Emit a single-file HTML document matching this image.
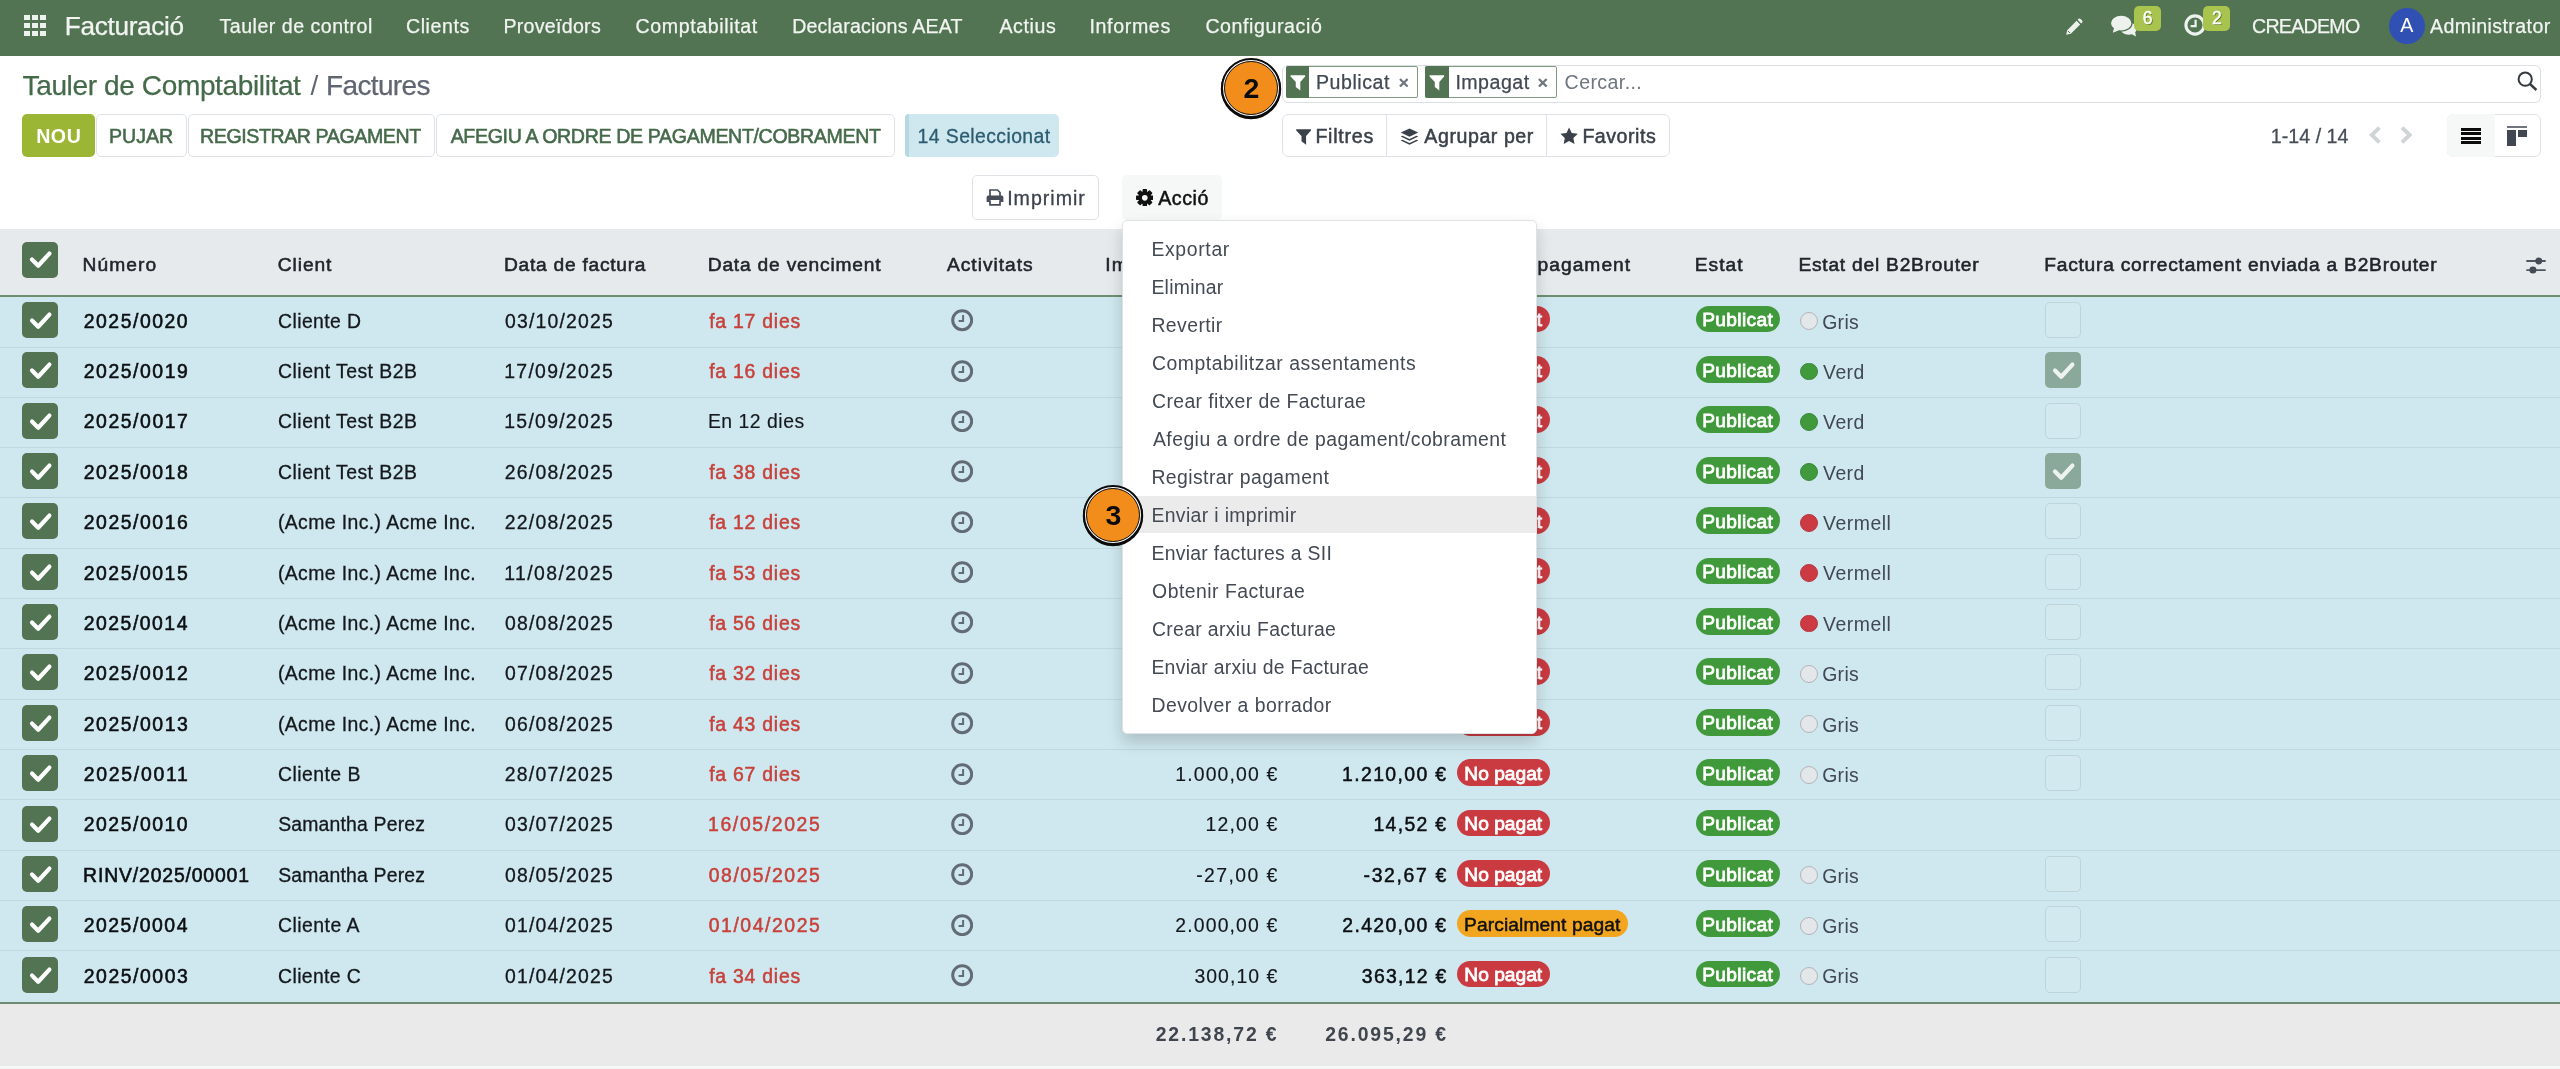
<!DOCTYPE html>
<html lang="ca"><head><meta charset="utf-8"><title>Factures - Odoo</title>
<style>html,body{margin:0;padding:0;}
body{width:2560px;height:1069px;overflow:hidden;background:#fff;position:relative;font-family:"Liberation Sans", sans-serif;}
div,svg,span{position:absolute;}
span{white-space:pre;line-height:40px;}
#L0,#L1{left:0;top:0;width:2560px;height:1069px;overflow:hidden;will-change:transform;}</style></head>
<body>
<div id="L0"><div style="left:0px;top:0px;width:2560px;height:55.5px;background:#527453;"></div>
<div style="left:23.8px;top:15.2px;width:6.1px;height:4.9px;background:#eef2ee;"></div>
<div style="left:31.700000000000003px;top:15.2px;width:6.1px;height:4.9px;background:#eef2ee;"></div>
<div style="left:39.6px;top:15.2px;width:6.1px;height:4.9px;background:#eef2ee;"></div>
<div style="left:23.8px;top:23.2px;width:6.1px;height:4.9px;background:#eef2ee;"></div>
<div style="left:31.700000000000003px;top:23.2px;width:6.1px;height:4.9px;background:#eef2ee;"></div>
<div style="left:39.6px;top:23.2px;width:6.1px;height:4.9px;background:#eef2ee;"></div>
<div style="left:23.8px;top:31.2px;width:6.1px;height:4.9px;background:#eef2ee;"></div>
<div style="left:31.700000000000003px;top:31.2px;width:6.1px;height:4.9px;background:#eef2ee;"></div>
<div style="left:39.6px;top:31.2px;width:6.1px;height:4.9px;background:#eef2ee;"></div>
<div style="left:2389px;top:8px;width:35.5px;height:35.5px;background:#3150b4;border-radius:18px;"></div>
<svg style="left:2065px;top:17.5px;" width="18" height="18" viewBox="0 0 18 18"><path d="M1.2 16.8 L2.2 12.2 L11.6 2.8 L15.2 6.4 L5.8 15.8 Z M12.6 1.8 L13.6 0.8 Q14.6 0 15.6 0.9 L17.1 2.4 Q18 3.4 17.2 4.4 L16.2 5.4 Z" fill="#eef2ee"/><path d="M3 13 L5 15" stroke="#527453" stroke-width="1"/></svg>
<svg style="left:2110px;top:15px;" width="27" height="23" viewBox="0 0 27 23"><g fill="#eef2ee"><ellipse cx="18.6" cy="13.6" rx="8.2" ry="6.1"/><path d="M20.5 18.6 L26 21.6 L24.8 15.6 Z"/></g><g fill="#eef2ee" stroke="#527453" stroke-width="2.6" paint-order="stroke"><ellipse cx="11.2" cy="8.1" rx="10.2" ry="7.3"/></g><path d="M4.2 12.6 L2.8 17.8 L9.6 14.9 Z" fill="#eef2ee"/></svg>
<div style="left:2134.2px;top:6.4px;width:26.8px;height:24.2px;background:#a8c44f;border-radius:5px;"></div>
<svg style="left:2183.5px;top:14.4px;" width="22" height="22" viewBox="0 0 22 22"><circle cx="11" cy="11" r="9.1" fill="none" stroke="#eef2ee" stroke-width="3.1"/><path d="M11.6 5.8 V12.2 H6.6" fill="none" stroke="#eef2ee" stroke-width="2.2"/></svg>
<div style="left:2203.2px;top:6.4px;width:26.6px;height:24.2px;background:#a8c44f;border-radius:5px;"></div>
<div style="left:22px;top:113.9px;width:73px;height:43.4px;background:#9bb634;border-radius:5px;"></div>
<div style="left:95.5px;top:113.9px;width:91px;height:43.4px;background:#fff;border-radius:5px;border:1.5px solid #dee2e6;box-sizing:border-box;"></div>
<div style="left:187.5px;top:113.9px;width:247.8px;height:43.4px;background:#fff;border-radius:5px;border:1.5px solid #dee2e6;box-sizing:border-box;"></div>
<div style="left:436px;top:113.9px;width:459.3px;height:43.4px;background:#fff;border-radius:5px;border:1.5px solid #dee2e6;box-sizing:border-box;"></div>
<div style="left:904.5px;top:113.9px;width:154.8px;height:43.4px;background:#cfe7ef;border-radius:5px;"></div>
<div style="left:904.5px;top:113.9px;width:4px;height:43.4px;background:#b6d8e2;border-radius:5px 0 0 5px;"></div>
<div style="left:972px;top:175.4px;width:126.8px;height:44.2px;background:#fff;border-radius:5px;border:1.5px solid #dee2e6;box-sizing:border-box;"></div>
<svg style="left:985.5px;top:188.6px;" width="18" height="17" viewBox="0 0 18 17"><path d="M4 7 V1 H11.5 L14 3.5 V7" fill="none" stroke="#464d57" stroke-width="1.7"/><path d="M0.6 8.4 Q0.6 6.6 2.4 6.6 H15.6 Q17.4 6.6 17.4 8.4 V13 H14.2 V11 H3.8 V13 H0.6 Z" fill="#464d57"/><path d="M4 11.2 V15.8 H14 V11.2" fill="none" stroke="#464d57" stroke-width="1.7"/></svg>
<div style="left:1121.8px;top:175.4px;width:100px;height:44.4px;background:#f6f8f8;border-radius:5px;"></div>
<svg style="left:1135.5px;top:188.6px;" width="17.6" height="17.6" viewBox="-9 -9 18 18"><rect x="-2.3" y="-9" width="4.6" height="18" rx="0.8" transform="rotate(0)" fill="#111"/><rect x="-2.3" y="-9" width="4.6" height="18" rx="0.8" transform="rotate(45)" fill="#111"/><rect x="-2.3" y="-9" width="4.6" height="18" rx="0.8" transform="rotate(90)" fill="#111"/><rect x="-2.3" y="-9" width="4.6" height="18" rx="0.8" transform="rotate(135)" fill="#111"/><circle r="6.6" fill="#111"/><circle r="2.9" fill="#f6f8f8"/></svg>
<div style="left:1282.3px;top:64.8px;width:1258.6px;height:37.8px;background:#fff;border-radius:6px;border:1.6px solid #dcdfe3;box-sizing:border-box;"></div>
<div style="left:1285.8px;top:66.4px;width:131.8px;height:31.2px;background:#fff;border-radius:2px;border:1.3px solid #7f9c80;box-sizing:border-box;"></div>
<div style="left:1285.8px;top:66.4px;width:23.5px;height:31.2px;background:#527453;border-radius:2px 0 0 2px;"></div>
<svg style="left:1290.0px;top:75.2px;" width="15.7" height="15.5" viewBox="0 0 15.2 15.8"><path d="M0.2 0.3 H15 V1.5 L10.1 7.1 V15.8 L5.5 12.2 V7.1 L0.2 1.5 Z" fill="#fff"/></svg>
<svg style="left:1398.8px;top:77.6px;" width="9.6" height="9.6" viewBox="0 0 10 10"><path d="M1 1 L9 9 M9 1 L1 9" stroke="#6f7680" stroke-width="2.3"/></svg>
<div style="left:1425px;top:66.4px;width:132px;height:31.2px;background:#fff;border-radius:2px;border:1.3px solid #7f9c80;box-sizing:border-box;"></div>
<div style="left:1425px;top:66.4px;width:23.5px;height:31.2px;background:#527453;border-radius:2px 0 0 2px;"></div>
<svg style="left:1429.2px;top:75.2px;" width="15.7" height="15.5" viewBox="0 0 15.2 15.8"><path d="M0.2 0.3 H15 V1.5 L10.1 7.1 V15.8 L5.5 12.2 V7.1 L0.2 1.5 Z" fill="#fff"/></svg>
<svg style="left:1538.2px;top:77.6px;" width="9.6" height="9.6" viewBox="0 0 10 10"><path d="M1 1 L9 9 M9 1 L1 9" stroke="#6f7680" stroke-width="2.3"/></svg>
<svg style="left:2517.4px;top:71.2px;" width="20.5" height="20" viewBox="0 0 20.5 20"><circle cx="8.2" cy="8.2" r="6.6" fill="none" stroke="#343a40" stroke-width="2"/><path d="M13 13 L19.4 19" stroke="#343a40" stroke-width="2.4"/></svg>
<div style="left:1282px;top:113.9px;width:388px;height:43.4px;background:#fff;border-radius:6px;border:1.5px solid #dee2e6;box-sizing:border-box;"></div>
<div style="left:1386px;top:113.9px;width:1px;height:43.4px;background:#dfe3e7;"></div>
<div style="left:1546px;top:113.9px;width:1px;height:43.4px;background:#dfe3e7;"></div>
<svg style="left:1295.9px;top:129.2px;" width="15.2" height="15.8" viewBox="0 0 15.2 15.8"><path d="M0.2 0.3 H15 V1.5 L10.1 7.1 V15.8 L5.5 12.2 V7.1 L0.2 1.5 Z" fill="#3a414a"/></svg>
<svg style="left:1399.7px;top:126.8px;" width="19" height="19.8" viewBox="0 0 20 19"><path d="M10 0.6 L19.2 5 L10 9.4 L0.8 5 Z" fill="#3a414a"/><path d="M2.6 8.2 L0.8 9.2 L10 13.6 L19.2 9.2 L17.4 8.2 L10 11.6 Z" fill="#3a414a"/><path d="M2.6 12.4 L0.8 13.4 L10 17.8 L19.2 13.4 L17.4 12.4 L10 15.8 Z" fill="#3a414a"/></svg>
<svg style="left:1560.3px;top:127.3px;" width="18.2" height="17.4" viewBox="0 0 20 19"><path d="M10 0.4 L12.9 6.6 L19.6 7.4 L14.7 12 L16 18.6 L10 15.4 L4 18.6 L5.3 12 L0.4 7.4 L7.1 6.6 Z" fill="#3a414a"/></svg>
<svg style="left:2369px;top:126.2px;" width="12.4" height="18" viewBox="0 0 12 18"><path d="M10.2 1.6 L2.6 9 L10.2 16.4" fill="none" stroke="#cfd5d6" stroke-width="3.9"/></svg>
<svg style="left:2399.6px;top:126.2px;" width="12.4" height="18" viewBox="0 0 12 18"><path d="M1.8 1.6 L9.4 9 L1.8 16.4" fill="none" stroke="#cfd5d6" stroke-width="3.9"/></svg>
<div style="left:2447.2px;top:113.9px;width:94px;height:43.4px;background:#fff;border-radius:6px;border:1.5px solid #dee2e6;box-sizing:border-box;"></div>
<div style="left:2447.2px;top:113.9px;width:47.6px;height:43.4px;background:#f6f8f8;border-radius:6px 0 0 6px;"></div>
<div style="left:2461px;top:127.8px;width:19.6px;height:3.0px;background:#0b0b0b;"></div>
<div style="left:2461px;top:132.3px;width:19.6px;height:3.0px;background:#0b0b0b;"></div>
<div style="left:2461px;top:136.8px;width:19.6px;height:3.0px;background:#0b0b0b;"></div>
<div style="left:2461px;top:141.3px;width:19.6px;height:3.0px;background:#0b0b0b;"></div>
<div style="left:2507.3px;top:126.2px;width:19.9px;height:1.5px;background:#6f757d;"></div>
<div style="left:2507.3px;top:129.7px;width:8.8px;height:16px;background:#424852;"></div>
<div style="left:2518.4px;top:129.7px;width:8.8px;height:7px;background:#424852;"></div>
<div style="left:0px;top:228.6px;width:2560px;height:66.6px;background:#e6eaed;"></div>
<div style="left:0px;top:295px;width:2560px;height:2px;background:#6d8f70;"></div>
<div style="left:22px;top:241.8px;width:36.2px;height:36.2px;background:#527453;border-radius:5px;"></div>
<svg style="left:29.4px;top:249.4px;" width="23.4" height="21.4" viewBox="0 0 23.4 21.4"><path d="M3 10.6 L9.2 16.8 L20.4 4.6" fill="none" stroke="#fff" stroke-width="4.2" stroke-linecap="round" stroke-linejoin="round"/></svg>
<svg style="left:2524.6px;top:257px;" width="21" height="17.4" viewBox="0 0 21 17.4"><path d="M1.3 4 H20.7 M1.3 13.1 H20.7" stroke="#50565f" stroke-width="1.8"/><circle cx="13.8" cy="4" r="3.5" fill="#454b54"/><circle cx="7.9" cy="13.1" r="3.5" fill="#454b54"/></svg>
<div style="left:0px;top:297px;width:2560px;height:705.6px;background:#cfe7ee;"></div>
<div style="left:22px;top:302px;width:36.2px;height:36px;background:#527453;border-radius:5px;"></div>
<svg style="left:29.4px;top:309.6px;" width="23.4" height="21.4" viewBox="0 0 23.4 21.4"><path d="M3 10.6 L9.2 16.8 L20.4 4.6" fill="none" stroke="#fff" stroke-width="4.2" stroke-linecap="round" stroke-linejoin="round"/></svg>
<svg style="left:950.8px;top:309.2px;" width="22.4" height="22.4" viewBox="0 0 22.4 22.4"><circle cx="11.2" cy="11.2" r="9.5" fill="none" stroke="#636b74" stroke-width="3"/><path d="M12.1 6 V12 H7.6" fill="none" stroke="#636b74" stroke-width="2"/></svg>
<div style="left:1457.1px;top:305.70000000000005px;width:92.6px;height:26.8px;background:#c93a41;border-radius:13.4px;"></div>
<div style="left:1695.8px;top:305.70000000000005px;width:84.4px;height:26.8px;background:#40993b;border-radius:13.4px;"></div>
<div style="left:1799.9px;top:312.3px;width:17.7px;height:17.8px;background:#e4e7ea;border-radius:9px;border:1.5px solid #b3b4b8;box-sizing:border-box;"></div>
<div style="left:2045px;top:302px;width:36px;height:36px;background:#d3e9f0;border-radius:5px;border:1.3px solid #bfd3da;box-sizing:border-box;"></div>
<div style="left:0px;top:347px;width:2560px;height:1px;background:#bfd8df;"></div>
<div style="left:22px;top:352px;width:36.2px;height:36px;background:#527453;border-radius:5px;"></div>
<svg style="left:29.4px;top:359.6px;" width="23.4" height="21.4" viewBox="0 0 23.4 21.4"><path d="M3 10.6 L9.2 16.8 L20.4 4.6" fill="none" stroke="#fff" stroke-width="4.2" stroke-linecap="round" stroke-linejoin="round"/></svg>
<svg style="left:950.8px;top:359.58px;" width="22.4" height="22.4" viewBox="0 0 22.4 22.4"><circle cx="11.2" cy="11.2" r="9.5" fill="none" stroke="#636b74" stroke-width="3"/><path d="M12.1 6 V12 H7.6" fill="none" stroke="#636b74" stroke-width="2"/></svg>
<div style="left:1457.1px;top:356.08000000000004px;width:92.6px;height:26.8px;background:#c93a41;border-radius:13.4px;"></div>
<div style="left:1695.8px;top:356.08000000000004px;width:84.4px;height:26.8px;background:#40993b;border-radius:13.4px;"></div>
<div style="left:1799.9px;top:362.68px;width:17.7px;height:17.8px;background:#40993b;border-radius:9px;border:1.2px solid #39893a;box-sizing:border-box;"></div>
<div style="left:2045px;top:352px;width:36px;height:36px;background:#8aa99b;border-radius:5px;"></div>
<svg style="left:2052.4px;top:359.6px;" width="23.4" height="21.4" viewBox="0 0 23.4 21.4"><path d="M3 10.6 L9.2 16.8 L20.4 4.6" fill="none" stroke="#eef3f1" stroke-width="4.2" stroke-linecap="round" stroke-linejoin="round"/></svg>
<div style="left:0px;top:397px;width:2560px;height:1px;background:#bfd8df;"></div>
<div style="left:22px;top:403px;width:36.2px;height:36px;background:#527453;border-radius:5px;"></div>
<svg style="left:29.4px;top:410.6px;" width="23.4" height="21.4" viewBox="0 0 23.4 21.4"><path d="M3 10.6 L9.2 16.8 L20.4 4.6" fill="none" stroke="#fff" stroke-width="4.2" stroke-linecap="round" stroke-linejoin="round"/></svg>
<svg style="left:950.8px;top:409.96px;" width="22.4" height="22.4" viewBox="0 0 22.4 22.4"><circle cx="11.2" cy="11.2" r="9.5" fill="none" stroke="#636b74" stroke-width="3"/><path d="M12.1 6 V12 H7.6" fill="none" stroke="#636b74" stroke-width="2"/></svg>
<div style="left:1457.1px;top:406.46000000000004px;width:92.6px;height:26.8px;background:#c93a41;border-radius:13.4px;"></div>
<div style="left:1695.8px;top:406.46000000000004px;width:84.4px;height:26.8px;background:#40993b;border-radius:13.4px;"></div>
<div style="left:1799.9px;top:413.06px;width:17.7px;height:17.8px;background:#40993b;border-radius:9px;border:1.2px solid #39893a;box-sizing:border-box;"></div>
<div style="left:2045px;top:403px;width:36px;height:36px;background:#d3e9f0;border-radius:5px;border:1.3px solid #bfd3da;box-sizing:border-box;"></div>
<div style="left:0px;top:447px;width:2560px;height:1px;background:#bfd8df;"></div>
<div style="left:22px;top:453px;width:36.2px;height:36px;background:#527453;border-radius:5px;"></div>
<svg style="left:29.4px;top:460.6px;" width="23.4" height="21.4" viewBox="0 0 23.4 21.4"><path d="M3 10.6 L9.2 16.8 L20.4 4.6" fill="none" stroke="#fff" stroke-width="4.2" stroke-linecap="round" stroke-linejoin="round"/></svg>
<svg style="left:950.8px;top:460.34px;" width="22.4" height="22.4" viewBox="0 0 22.4 22.4"><circle cx="11.2" cy="11.2" r="9.5" fill="none" stroke="#636b74" stroke-width="3"/><path d="M12.1 6 V12 H7.6" fill="none" stroke="#636b74" stroke-width="2"/></svg>
<div style="left:1457.1px;top:456.84000000000003px;width:92.6px;height:26.8px;background:#c93a41;border-radius:13.4px;"></div>
<div style="left:1695.8px;top:456.84000000000003px;width:84.4px;height:26.8px;background:#40993b;border-radius:13.4px;"></div>
<div style="left:1799.9px;top:463.44000000000005px;width:17.7px;height:17.8px;background:#40993b;border-radius:9px;border:1.2px solid #39893a;box-sizing:border-box;"></div>
<div style="left:2045px;top:453px;width:36px;height:36px;background:#8aa99b;border-radius:5px;"></div>
<svg style="left:2052.4px;top:460.6px;" width="23.4" height="21.4" viewBox="0 0 23.4 21.4"><path d="M3 10.6 L9.2 16.8 L20.4 4.6" fill="none" stroke="#eef3f1" stroke-width="4.2" stroke-linecap="round" stroke-linejoin="round"/></svg>
<div style="left:0px;top:497px;width:2560px;height:1px;background:#bfd8df;"></div>
<div style="left:22px;top:503px;width:36.2px;height:36px;background:#527453;border-radius:5px;"></div>
<svg style="left:29.4px;top:510.6px;" width="23.4" height="21.4" viewBox="0 0 23.4 21.4"><path d="M3 10.6 L9.2 16.8 L20.4 4.6" fill="none" stroke="#fff" stroke-width="4.2" stroke-linecap="round" stroke-linejoin="round"/></svg>
<svg style="left:950.8px;top:510.71999999999997px;" width="22.4" height="22.4" viewBox="0 0 22.4 22.4"><circle cx="11.2" cy="11.2" r="9.5" fill="none" stroke="#636b74" stroke-width="3"/><path d="M12.1 6 V12 H7.6" fill="none" stroke="#636b74" stroke-width="2"/></svg>
<div style="left:1457.1px;top:507.22px;width:92.6px;height:26.8px;background:#c93a41;border-radius:13.4px;"></div>
<div style="left:1695.8px;top:507.22px;width:84.4px;height:26.8px;background:#40993b;border-radius:13.4px;"></div>
<div style="left:1799.9px;top:513.82px;width:17.7px;height:17.8px;background:#cc3b43;border-radius:9px;border:1.2px solid #b8343c;box-sizing:border-box;"></div>
<div style="left:2045px;top:503px;width:36px;height:36px;background:#d3e9f0;border-radius:5px;border:1.3px solid #bfd3da;box-sizing:border-box;"></div>
<div style="left:0px;top:548px;width:2560px;height:1px;background:#bfd8df;"></div>
<div style="left:22px;top:554px;width:36.2px;height:36px;background:#527453;border-radius:5px;"></div>
<svg style="left:29.4px;top:561.6px;" width="23.4" height="21.4" viewBox="0 0 23.4 21.4"><path d="M3 10.6 L9.2 16.8 L20.4 4.6" fill="none" stroke="#fff" stroke-width="4.2" stroke-linecap="round" stroke-linejoin="round"/></svg>
<svg style="left:950.8px;top:561.0999999999999px;" width="22.4" height="22.4" viewBox="0 0 22.4 22.4"><circle cx="11.2" cy="11.2" r="9.5" fill="none" stroke="#636b74" stroke-width="3"/><path d="M12.1 6 V12 H7.6" fill="none" stroke="#636b74" stroke-width="2"/></svg>
<div style="left:1457.1px;top:557.6px;width:92.6px;height:26.8px;background:#c93a41;border-radius:13.4px;"></div>
<div style="left:1695.8px;top:557.6px;width:84.4px;height:26.8px;background:#40993b;border-radius:13.4px;"></div>
<div style="left:1799.9px;top:564.2px;width:17.7px;height:17.8px;background:#cc3b43;border-radius:9px;border:1.2px solid #b8343c;box-sizing:border-box;"></div>
<div style="left:2045px;top:554px;width:36px;height:36px;background:#d3e9f0;border-radius:5px;border:1.3px solid #bfd3da;box-sizing:border-box;"></div>
<div style="left:0px;top:598px;width:2560px;height:1px;background:#bfd8df;"></div>
<div style="left:22px;top:604px;width:36.2px;height:36px;background:#527453;border-radius:5px;"></div>
<svg style="left:29.4px;top:611.6px;" width="23.4" height="21.4" viewBox="0 0 23.4 21.4"><path d="M3 10.6 L9.2 16.8 L20.4 4.6" fill="none" stroke="#fff" stroke-width="4.2" stroke-linecap="round" stroke-linejoin="round"/></svg>
<svg style="left:950.8px;top:611.48px;" width="22.4" height="22.4" viewBox="0 0 22.4 22.4"><circle cx="11.2" cy="11.2" r="9.5" fill="none" stroke="#636b74" stroke-width="3"/><path d="M12.1 6 V12 H7.6" fill="none" stroke="#636b74" stroke-width="2"/></svg>
<div style="left:1457.1px;top:607.9800000000001px;width:92.6px;height:26.8px;background:#c93a41;border-radius:13.4px;"></div>
<div style="left:1695.8px;top:607.9800000000001px;width:84.4px;height:26.8px;background:#40993b;border-radius:13.4px;"></div>
<div style="left:1799.9px;top:614.58px;width:17.7px;height:17.8px;background:#cc3b43;border-radius:9px;border:1.2px solid #b8343c;box-sizing:border-box;"></div>
<div style="left:2045px;top:604px;width:36px;height:36px;background:#d3e9f0;border-radius:5px;border:1.3px solid #bfd3da;box-sizing:border-box;"></div>
<div style="left:0px;top:648px;width:2560px;height:1px;background:#bfd8df;"></div>
<div style="left:22px;top:654px;width:36.2px;height:36px;background:#527453;border-radius:5px;"></div>
<svg style="left:29.4px;top:661.6px;" width="23.4" height="21.4" viewBox="0 0 23.4 21.4"><path d="M3 10.6 L9.2 16.8 L20.4 4.6" fill="none" stroke="#fff" stroke-width="4.2" stroke-linecap="round" stroke-linejoin="round"/></svg>
<svg style="left:950.8px;top:661.8599999999999px;" width="22.4" height="22.4" viewBox="0 0 22.4 22.4"><circle cx="11.2" cy="11.2" r="9.5" fill="none" stroke="#636b74" stroke-width="3"/><path d="M12.1 6 V12 H7.6" fill="none" stroke="#636b74" stroke-width="2"/></svg>
<div style="left:1457.1px;top:658.36px;width:92.6px;height:26.8px;background:#c93a41;border-radius:13.4px;"></div>
<div style="left:1695.8px;top:658.36px;width:84.4px;height:26.8px;background:#40993b;border-radius:13.4px;"></div>
<div style="left:1799.9px;top:664.96px;width:17.7px;height:17.8px;background:#e4e7ea;border-radius:9px;border:1.5px solid #b3b4b8;box-sizing:border-box;"></div>
<div style="left:2045px;top:654px;width:36px;height:36px;background:#d3e9f0;border-radius:5px;border:1.3px solid #bfd3da;box-sizing:border-box;"></div>
<div style="left:0px;top:699px;width:2560px;height:1px;background:#bfd8df;"></div>
<div style="left:22px;top:705px;width:36.2px;height:36px;background:#527453;border-radius:5px;"></div>
<svg style="left:29.4px;top:712.6px;" width="23.4" height="21.4" viewBox="0 0 23.4 21.4"><path d="M3 10.6 L9.2 16.8 L20.4 4.6" fill="none" stroke="#fff" stroke-width="4.2" stroke-linecap="round" stroke-linejoin="round"/></svg>
<svg style="left:950.8px;top:712.24px;" width="22.4" height="22.4" viewBox="0 0 22.4 22.4"><circle cx="11.2" cy="11.2" r="9.5" fill="none" stroke="#636b74" stroke-width="3"/><path d="M12.1 6 V12 H7.6" fill="none" stroke="#636b74" stroke-width="2"/></svg>
<div style="left:1457.1px;top:708.7400000000001px;width:92.6px;height:26.8px;background:#c93a41;border-radius:13.4px;"></div>
<div style="left:1695.8px;top:708.7400000000001px;width:84.4px;height:26.8px;background:#40993b;border-radius:13.4px;"></div>
<div style="left:1799.9px;top:715.34px;width:17.7px;height:17.8px;background:#e4e7ea;border-radius:9px;border:1.5px solid #b3b4b8;box-sizing:border-box;"></div>
<div style="left:2045px;top:705px;width:36px;height:36px;background:#d3e9f0;border-radius:5px;border:1.3px solid #bfd3da;box-sizing:border-box;"></div>
<div style="left:0px;top:749px;width:2560px;height:1px;background:#bfd8df;"></div>
<div style="left:22px;top:755px;width:36.2px;height:36px;background:#527453;border-radius:5px;"></div>
<svg style="left:29.4px;top:762.6px;" width="23.4" height="21.4" viewBox="0 0 23.4 21.4"><path d="M3 10.6 L9.2 16.8 L20.4 4.6" fill="none" stroke="#fff" stroke-width="4.2" stroke-linecap="round" stroke-linejoin="round"/></svg>
<svg style="left:950.8px;top:762.6199999999999px;" width="22.4" height="22.4" viewBox="0 0 22.4 22.4"><circle cx="11.2" cy="11.2" r="9.5" fill="none" stroke="#636b74" stroke-width="3"/><path d="M12.1 6 V12 H7.6" fill="none" stroke="#636b74" stroke-width="2"/></svg>
<div style="left:1457.1px;top:759.12px;width:92.6px;height:26.8px;background:#c93a41;border-radius:13.4px;"></div>
<div style="left:1695.8px;top:759.12px;width:84.4px;height:26.8px;background:#40993b;border-radius:13.4px;"></div>
<div style="left:1799.9px;top:765.72px;width:17.7px;height:17.8px;background:#e4e7ea;border-radius:9px;border:1.5px solid #b3b4b8;box-sizing:border-box;"></div>
<div style="left:2045px;top:755px;width:36px;height:36px;background:#d3e9f0;border-radius:5px;border:1.3px solid #bfd3da;box-sizing:border-box;"></div>
<div style="left:0px;top:799px;width:2560px;height:1px;background:#bfd8df;"></div>
<div style="left:22px;top:806px;width:36.2px;height:36px;background:#527453;border-radius:5px;"></div>
<svg style="left:29.4px;top:813.6px;" width="23.4" height="21.4" viewBox="0 0 23.4 21.4"><path d="M3 10.6 L9.2 16.8 L20.4 4.6" fill="none" stroke="#fff" stroke-width="4.2" stroke-linecap="round" stroke-linejoin="round"/></svg>
<svg style="left:950.8px;top:813.0px;" width="22.4" height="22.4" viewBox="0 0 22.4 22.4"><circle cx="11.2" cy="11.2" r="9.5" fill="none" stroke="#636b74" stroke-width="3"/><path d="M12.1 6 V12 H7.6" fill="none" stroke="#636b74" stroke-width="2"/></svg>
<div style="left:1457.1px;top:809.5000000000001px;width:92.6px;height:26.8px;background:#c93a41;border-radius:13.4px;"></div>
<div style="left:1695.8px;top:809.5000000000001px;width:84.4px;height:26.8px;background:#40993b;border-radius:13.4px;"></div>
<div style="left:0px;top:850px;width:2560px;height:1px;background:#bfd8df;"></div>
<div style="left:22px;top:856px;width:36.2px;height:36px;background:#527453;border-radius:5px;"></div>
<svg style="left:29.4px;top:863.6px;" width="23.4" height="21.4" viewBox="0 0 23.4 21.4"><path d="M3 10.6 L9.2 16.8 L20.4 4.6" fill="none" stroke="#fff" stroke-width="4.2" stroke-linecap="round" stroke-linejoin="round"/></svg>
<svg style="left:950.8px;top:863.38px;" width="22.4" height="22.4" viewBox="0 0 22.4 22.4"><circle cx="11.2" cy="11.2" r="9.5" fill="none" stroke="#636b74" stroke-width="3"/><path d="M12.1 6 V12 H7.6" fill="none" stroke="#636b74" stroke-width="2"/></svg>
<div style="left:1457.1px;top:859.8800000000001px;width:92.6px;height:26.8px;background:#c93a41;border-radius:13.4px;"></div>
<div style="left:1695.8px;top:859.8800000000001px;width:84.4px;height:26.8px;background:#40993b;border-radius:13.4px;"></div>
<div style="left:1799.9px;top:866.4800000000001px;width:17.7px;height:17.8px;background:#e4e7ea;border-radius:9px;border:1.5px solid #b3b4b8;box-sizing:border-box;"></div>
<div style="left:2045px;top:856px;width:36px;height:36px;background:#d3e9f0;border-radius:5px;border:1.3px solid #bfd3da;box-sizing:border-box;"></div>
<div style="left:0px;top:900px;width:2560px;height:1px;background:#bfd8df;"></div>
<div style="left:22px;top:906px;width:36.2px;height:36px;background:#527453;border-radius:5px;"></div>
<svg style="left:29.4px;top:913.6px;" width="23.4" height="21.4" viewBox="0 0 23.4 21.4"><path d="M3 10.6 L9.2 16.8 L20.4 4.6" fill="none" stroke="#fff" stroke-width="4.2" stroke-linecap="round" stroke-linejoin="round"/></svg>
<svg style="left:950.8px;top:913.76px;" width="22.4" height="22.4" viewBox="0 0 22.4 22.4"><circle cx="11.2" cy="11.2" r="9.5" fill="none" stroke="#636b74" stroke-width="3"/><path d="M12.1 6 V12 H7.6" fill="none" stroke="#636b74" stroke-width="2"/></svg>
<div style="left:1457.1px;top:910.2600000000001px;width:171px;height:26.8px;background:#f2a51f;border-radius:13.4px;"></div>
<div style="left:1695.8px;top:910.2600000000001px;width:84.4px;height:26.8px;background:#40993b;border-radius:13.4px;"></div>
<div style="left:1799.9px;top:916.86px;width:17.7px;height:17.8px;background:#e4e7ea;border-radius:9px;border:1.5px solid #b3b4b8;box-sizing:border-box;"></div>
<div style="left:2045px;top:906px;width:36px;height:36px;background:#d3e9f0;border-radius:5px;border:1.3px solid #bfd3da;box-sizing:border-box;"></div>
<div style="left:0px;top:950px;width:2560px;height:1px;background:#bfd8df;"></div>
<div style="left:22px;top:957px;width:36.2px;height:36px;background:#527453;border-radius:5px;"></div>
<svg style="left:29.4px;top:964.6px;" width="23.4" height="21.4" viewBox="0 0 23.4 21.4"><path d="M3 10.6 L9.2 16.8 L20.4 4.6" fill="none" stroke="#fff" stroke-width="4.2" stroke-linecap="round" stroke-linejoin="round"/></svg>
<svg style="left:950.8px;top:964.14px;" width="22.4" height="22.4" viewBox="0 0 22.4 22.4"><circle cx="11.2" cy="11.2" r="9.5" fill="none" stroke="#636b74" stroke-width="3"/><path d="M12.1 6 V12 H7.6" fill="none" stroke="#636b74" stroke-width="2"/></svg>
<div style="left:1457.1px;top:960.6400000000001px;width:92.6px;height:26.8px;background:#c93a41;border-radius:13.4px;"></div>
<div style="left:1695.8px;top:960.6400000000001px;width:84.4px;height:26.8px;background:#40993b;border-radius:13.4px;"></div>
<div style="left:1799.9px;top:967.2400000000001px;width:17.7px;height:17.8px;background:#e4e7ea;border-radius:9px;border:1.5px solid #b3b4b8;box-sizing:border-box;"></div>
<div style="left:2045px;top:957px;width:36px;height:36px;background:#d3e9f0;border-radius:5px;border:1.3px solid #bfd3da;box-sizing:border-box;"></div>
<div style="left:0px;top:1002.4px;width:2560px;height:1.8px;background:#6f8c71;"></div>
<div style="left:0px;top:1004px;width:2560px;height:61.7px;background:#eaeaea;"></div>
<div style="left:0px;top:1065.7px;width:2560px;height:4px;background:#f6f8f7;"></div>
<span style="top:6px;font-size:26.2px;color:#f1f4f1;left:64.85px;-webkit-text-stroke:0.25px #f1f4f1;letter-spacing:-0.335px;">Facturació</span>
<span style="top:6px;font-size:19.6px;color:#f1f4f1;left:219.56px;-webkit-text-stroke:0.25px #f1f4f1;letter-spacing:0.493px;">Tauler de control</span>
<span style="top:6px;font-size:19.6px;color:#f1f4f1;left:406.00px;-webkit-text-stroke:0.25px #f1f4f1;letter-spacing:0.550px;">Clients</span>
<span style="top:6px;font-size:19.6px;color:#f1f4f1;left:503.39px;-webkit-text-stroke:0.25px #f1f4f1;letter-spacing:0.285px;">Proveïdors</span>
<span style="top:6px;font-size:19.6px;color:#f1f4f1;left:635.50px;-webkit-text-stroke:0.25px #f1f4f1;letter-spacing:0.607px;">Comptabilitat</span>
<span style="top:6px;font-size:19.6px;color:#f1f4f1;left:792.19px;-webkit-text-stroke:0.25px #f1f4f1;letter-spacing:0.182px;">Declaracions AEAT</span>
<span style="top:6px;font-size:19.6px;color:#f1f4f1;left:999.46px;-webkit-text-stroke:0.25px #f1f4f1;letter-spacing:0.577px;">Actius</span>
<span style="top:6px;font-size:19.6px;color:#f1f4f1;left:1089.49px;-webkit-text-stroke:0.25px #f1f4f1;letter-spacing:0.640px;">Informes</span>
<span style="top:6px;font-size:19.6px;color:#f1f4f1;left:1205.40px;-webkit-text-stroke:0.25px #f1f4f1;letter-spacing:0.582px;">Configuració</span>
<span style="top:6px;font-size:19.6px;color:#f1f4f1;left:2252.00px;-webkit-text-stroke:0.25px #f1f4f1;letter-spacing:-0.714px;">CREADEMO</span>
<span style="top:6px;font-size:19.6px;color:#f1f4f1;left:2429.96px;-webkit-text-stroke:0.25px #f1f4f1;letter-spacing:0.403px;">Administrator</span>
<span style="top:5px;font-size:19.6px;color:#fff;left:2400.16px;">A</span>
<span style="top:-2px;font-size:17.6px;color:#fff;left:2142.64px;-webkit-text-stroke:0.4px #fff;text-shadow:1px 1.2px 0 rgba(40,60,20,.55);">6</span>
<span style="top:-2px;font-size:17.6px;color:#fff;left:2212.05px;-webkit-text-stroke:0.4px #fff;text-shadow:1px 1.2px 0 rgba(40,60,20,.55);">2</span>
<span style="top:66px;font-size:28px;color:#456a4a;left:22.57px;-webkit-text-stroke:0.25px #456a4a;letter-spacing:-0.366px;">Tauler de Comptabilitat</span>
<span style="top:66px;font-size:28px;color:#5f6672;left:310.51px;">/</span>
<span style="top:66px;font-size:28px;color:#5f6672;left:326.00px;-webkit-text-stroke:0.25px #5f6672;letter-spacing:-0.633px;">Factures</span>
<span style="top:116px;font-size:19.6px;color:#fff;left:36.19px;font-weight:700;letter-spacing:0.530px;">NOU</span>
<span style="top:116px;font-size:19.6px;color:#456a4a;left:108.99px;-webkit-text-stroke:0.55px #456a4a;letter-spacing:-0.008px;">PUJAR</span>
<span style="top:116px;font-size:19.6px;color:#456a4a;left:200.09px;-webkit-text-stroke:0.55px #456a4a;letter-spacing:-0.424px;">REGISTRAR PAGAMENT</span>
<span style="top:116px;font-size:19.6px;color:#456a4a;left:450.66px;-webkit-text-stroke:0.55px #456a4a;letter-spacing:-0.356px;">AFEGIU A ORDRE DE PAGAMENT/COBRAMENT</span>
<span style="top:116px;font-size:19.4px;color:#2c5c70;left:917.62px;-webkit-text-stroke:0.3px #2c5c70;letter-spacing:0.408px;">14 Seleccionat</span>
<span style="top:178px;font-size:19.6px;color:#3c434d;left:1007.19px;-webkit-text-stroke:0.3px #3c434d;letter-spacing:0.983px;">Imprimir</span>
<span style="top:178px;font-size:19.6px;color:#111;left:1158.16px;-webkit-text-stroke:0.5px #111;letter-spacing:0.560px;">Acció</span>
<span style="top:62px;font-size:19.6px;color:#414953;left:1315.99px;-webkit-text-stroke:0.25px #414953;letter-spacing:0.519px;">Publicat</span>
<span style="top:62px;font-size:19.6px;color:#414953;left:1455.39px;-webkit-text-stroke:0.25px #414953;letter-spacing:0.490px;">Impagat</span>
<span style="top:62px;font-size:19.6px;color:#6d757e;left:1564.60px;letter-spacing:0.392px;">Cercar...</span>
<span style="top:116px;font-size:19.6px;color:#3a414a;left:1315.39px;-webkit-text-stroke:0.5px #3a414a;letter-spacing:0.762px;">Filtres</span>
<span style="top:116px;font-size:19.6px;color:#3a414a;left:1424.36px;-webkit-text-stroke:0.5px #3a414a;letter-spacing:0.548px;">Agrupar per</span>
<span style="top:116px;font-size:19.6px;color:#3a414a;left:1582.39px;-webkit-text-stroke:0.5px #3a414a;letter-spacing:0.518px;">Favorits</span>
<span style="top:116px;font-size:19.6px;color:#454c56;left:2270.81px;-webkit-text-stroke:0.3px #454c56;letter-spacing:0.040px;">1-14 / 14</span>
<span style="top:245px;font-size:19.2px;color:#20262c;left:82.42px;-webkit-text-stroke:0.55px #20262c;letter-spacing:1.126px;">Número</span>
<span style="top:245px;font-size:19.2px;color:#20262c;left:277.82px;-webkit-text-stroke:0.55px #20262c;letter-spacing:0.911px;">Client</span>
<span style="top:245px;font-size:19.2px;color:#20262c;left:504.03px;-webkit-text-stroke:0.55px #20262c;letter-spacing:0.734px;">Data de factura</span>
<span style="top:245px;font-size:19.2px;color:#20262c;left:707.72px;-webkit-text-stroke:0.55px #20262c;letter-spacing:0.808px;">Data de venciment</span>
<span style="top:245px;font-size:19.2px;color:#20262c;left:946.96px;-webkit-text-stroke:0.55px #20262c;letter-spacing:0.994px;">Activitats</span>
<span style="top:245px;font-size:19.2px;color:#20262c;left:1105.23px;-webkit-text-stroke:0.55px #20262c;letter-spacing:1.104px;">Import</span>
<span style="top:245px;font-size:19.2px;color:#20262c;left:1537.56px;-webkit-text-stroke:0.55px #20262c;letter-spacing:1.033px;">pagament</span>
<span style="top:245px;font-size:19.2px;color:#20262c;left:1694.72px;-webkit-text-stroke:0.55px #20262c;letter-spacing:1.045px;">Estat</span>
<span style="top:245px;font-size:19.2px;color:#20262c;left:1798.42px;-webkit-text-stroke:0.55px #20262c;letter-spacing:0.767px;">Estat del B2Brouter</span>
<span style="top:245px;font-size:19.2px;color:#20262c;left:2044.22px;-webkit-text-stroke:0.55px #20262c;letter-spacing:0.763px;">Factura correctament enviada a B2Brouter</span>
<span style="top:301px;font-size:19.4px;color:#0c0f12;left:83.72px;-webkit-text-stroke:0.55px #0c0f12;letter-spacing:1.533px;">2025/0020</span>
<span style="top:301px;font-size:19.4px;color:#14181c;left:278.11px;-webkit-text-stroke:0.3px #14181c;letter-spacing:0.383px;">Cliente D</span>
<span style="top:301px;font-size:19.4px;color:#14181c;left:505.04px;-webkit-text-stroke:0.3px #14181c;letter-spacing:1.190px;">03/10/2025</span>
<span style="top:301px;font-size:19.4px;color:#c8413b;left:709.23px;-webkit-text-stroke:0.5px #c8413b;letter-spacing:0.765px;">fa 17 dies</span>
<span style="top:300px;font-size:19.2px;color:#fff;left:1464.33px;-webkit-text-stroke:0.8px #fff;letter-spacing:-0.008px;">No pagat</span>
<span style="top:300px;font-size:19.2px;color:#fff;left:1702.22px;-webkit-text-stroke:0.8px #fff;letter-spacing:0.321px;">Publicat</span>
<span style="top:302px;font-size:19.4px;color:#414851;left:1822.22px;letter-spacing:0.310px;">Gris</span>
<span style="top:351px;font-size:19.4px;color:#0c0f12;left:83.72px;-webkit-text-stroke:0.55px #0c0f12;letter-spacing:1.553px;">2025/0019</span>
<span style="top:351px;font-size:19.4px;color:#14181c;left:278.11px;-webkit-text-stroke:0.3px #14181c;letter-spacing:0.471px;">Client Test B2B</span>
<span style="top:351px;font-size:19.4px;color:#14181c;left:504.32px;-webkit-text-stroke:0.3px #14181c;letter-spacing:1.270px;">17/09/2025</span>
<span style="top:351px;font-size:19.4px;color:#c8413b;left:709.23px;-webkit-text-stroke:0.5px #c8413b;letter-spacing:0.765px;">fa 16 dies</span>
<span style="top:351px;font-size:19.2px;color:#fff;left:1464.33px;-webkit-text-stroke:0.8px #fff;letter-spacing:-0.008px;">No pagat</span>
<span style="top:351px;font-size:19.2px;color:#fff;left:1702.22px;-webkit-text-stroke:0.8px #fff;letter-spacing:0.321px;">Publicat</span>
<span style="top:352px;font-size:19.4px;color:#414851;left:1823.11px;letter-spacing:0.415px;">Verd</span>
<span style="top:401px;font-size:19.4px;color:#0c0f12;left:83.72px;-webkit-text-stroke:0.55px #0c0f12;letter-spacing:1.560px;">2025/0017</span>
<span style="top:401px;font-size:19.4px;color:#14181c;left:278.11px;-webkit-text-stroke:0.3px #14181c;letter-spacing:0.471px;">Client Test B2B</span>
<span style="top:401px;font-size:19.4px;color:#14181c;left:504.32px;-webkit-text-stroke:0.3px #14181c;letter-spacing:1.270px;">15/09/2025</span>
<span style="top:401px;font-size:19.4px;color:#14181c;left:707.91px;-webkit-text-stroke:0.15px #14181c;letter-spacing:0.517px;">En 12 dies</span>
<span style="top:401px;font-size:19.2px;color:#fff;left:1464.33px;-webkit-text-stroke:0.8px #fff;letter-spacing:-0.008px;">No pagat</span>
<span style="top:401px;font-size:19.2px;color:#fff;left:1702.22px;-webkit-text-stroke:0.8px #fff;letter-spacing:0.321px;">Publicat</span>
<span style="top:402px;font-size:19.4px;color:#414851;left:1823.11px;letter-spacing:0.415px;">Verd</span>
<span style="top:452px;font-size:19.4px;color:#0c0f12;left:83.72px;-webkit-text-stroke:0.55px #0c0f12;letter-spacing:1.543px;">2025/0018</span>
<span style="top:452px;font-size:19.4px;color:#14181c;left:278.11px;-webkit-text-stroke:0.3px #14181c;letter-spacing:0.471px;">Client Test B2B</span>
<span style="top:452px;font-size:19.4px;color:#14181c;left:504.82px;-webkit-text-stroke:0.3px #14181c;letter-spacing:1.214px;">26/08/2025</span>
<span style="top:452px;font-size:19.4px;color:#c8413b;left:709.23px;-webkit-text-stroke:0.5px #c8413b;letter-spacing:0.765px;">fa 38 dies</span>
<span style="top:452px;font-size:19.2px;color:#fff;left:1464.33px;-webkit-text-stroke:0.8px #fff;letter-spacing:-0.008px;">No pagat</span>
<span style="top:452px;font-size:19.2px;color:#fff;left:1702.22px;-webkit-text-stroke:0.8px #fff;letter-spacing:0.321px;">Publicat</span>
<span style="top:453px;font-size:19.4px;color:#414851;left:1823.11px;letter-spacing:0.415px;">Verd</span>
<span style="top:502px;font-size:19.4px;color:#0c0f12;left:83.72px;-webkit-text-stroke:0.55px #0c0f12;letter-spacing:1.545px;">2025/0016</span>
<span style="top:502px;font-size:19.4px;color:#14181c;left:277.90px;-webkit-text-stroke:0.3px #14181c;letter-spacing:0.406px;">(Acme Inc.) Acme Inc.</span>
<span style="top:502px;font-size:19.4px;color:#14181c;left:504.82px;-webkit-text-stroke:0.3px #14181c;letter-spacing:1.214px;">22/08/2025</span>
<span style="top:502px;font-size:19.4px;color:#c8413b;left:709.23px;-webkit-text-stroke:0.5px #c8413b;letter-spacing:0.765px;">fa 12 dies</span>
<span style="top:502px;font-size:19.2px;color:#fff;left:1464.33px;-webkit-text-stroke:0.8px #fff;letter-spacing:-0.008px;">No pagat</span>
<span style="top:502px;font-size:19.2px;color:#fff;left:1702.22px;-webkit-text-stroke:0.8px #fff;letter-spacing:0.321px;">Publicat</span>
<span style="top:503px;font-size:19.4px;color:#414851;left:1823.11px;letter-spacing:0.519px;">Vermell</span>
<span style="top:553px;font-size:19.4px;color:#0c0f12;left:83.72px;-webkit-text-stroke:0.55px #0c0f12;letter-spacing:1.540px;">2025/0015</span>
<span style="top:553px;font-size:19.4px;color:#14181c;left:277.90px;-webkit-text-stroke:0.3px #14181c;letter-spacing:0.406px;">(Acme Inc.) Acme Inc.</span>
<span style="top:553px;font-size:19.4px;color:#14181c;left:504.32px;-webkit-text-stroke:0.3px #14181c;letter-spacing:1.431px;">11/08/2025</span>
<span style="top:553px;font-size:19.4px;color:#c8413b;left:709.23px;-webkit-text-stroke:0.5px #c8413b;letter-spacing:0.765px;">fa 53 dies</span>
<span style="top:552px;font-size:19.2px;color:#fff;left:1464.33px;-webkit-text-stroke:0.8px #fff;letter-spacing:-0.008px;">No pagat</span>
<span style="top:552px;font-size:19.2px;color:#fff;left:1702.22px;-webkit-text-stroke:0.8px #fff;letter-spacing:0.321px;">Publicat</span>
<span style="top:553px;font-size:19.4px;color:#414851;left:1823.11px;letter-spacing:0.519px;">Vermell</span>
<span style="top:603px;font-size:19.4px;color:#0c0f12;left:83.72px;-webkit-text-stroke:0.55px #0c0f12;letter-spacing:1.509px;">2025/0014</span>
<span style="top:603px;font-size:19.4px;color:#14181c;left:277.90px;-webkit-text-stroke:0.3px #14181c;letter-spacing:0.406px;">(Acme Inc.) Acme Inc.</span>
<span style="top:603px;font-size:19.4px;color:#14181c;left:505.04px;-webkit-text-stroke:0.3px #14181c;letter-spacing:1.190px;">08/08/2025</span>
<span style="top:603px;font-size:19.4px;color:#c8413b;left:709.23px;-webkit-text-stroke:0.5px #c8413b;letter-spacing:0.765px;">fa 56 dies</span>
<span style="top:603px;font-size:19.2px;color:#fff;left:1464.33px;-webkit-text-stroke:0.8px #fff;letter-spacing:-0.008px;">No pagat</span>
<span style="top:603px;font-size:19.2px;color:#fff;left:1702.22px;-webkit-text-stroke:0.8px #fff;letter-spacing:0.321px;">Publicat</span>
<span style="top:604px;font-size:19.4px;color:#414851;left:1823.11px;letter-spacing:0.519px;">Vermell</span>
<span style="top:653px;font-size:19.4px;color:#0c0f12;left:83.72px;-webkit-text-stroke:0.55px #0c0f12;letter-spacing:1.560px;">2025/0012</span>
<span style="top:653px;font-size:19.4px;color:#14181c;left:277.90px;-webkit-text-stroke:0.3px #14181c;letter-spacing:0.406px;">(Acme Inc.) Acme Inc.</span>
<span style="top:653px;font-size:19.4px;color:#14181c;left:505.04px;-webkit-text-stroke:0.3px #14181c;letter-spacing:1.190px;">07/08/2025</span>
<span style="top:653px;font-size:19.4px;color:#c8413b;left:709.23px;-webkit-text-stroke:0.5px #c8413b;letter-spacing:0.765px;">fa 32 dies</span>
<span style="top:653px;font-size:19.2px;color:#fff;left:1464.33px;-webkit-text-stroke:0.8px #fff;letter-spacing:-0.008px;">No pagat</span>
<span style="top:653px;font-size:19.2px;color:#fff;left:1702.22px;-webkit-text-stroke:0.8px #fff;letter-spacing:0.321px;">Publicat</span>
<span style="top:654px;font-size:19.4px;color:#414851;left:1822.22px;letter-spacing:0.310px;">Gris</span>
<span style="top:704px;font-size:19.4px;color:#0c0f12;left:83.72px;-webkit-text-stroke:0.55px #0c0f12;letter-spacing:1.545px;">2025/0013</span>
<span style="top:704px;font-size:19.4px;color:#14181c;left:277.90px;-webkit-text-stroke:0.3px #14181c;letter-spacing:0.406px;">(Acme Inc.) Acme Inc.</span>
<span style="top:704px;font-size:19.4px;color:#14181c;left:505.04px;-webkit-text-stroke:0.3px #14181c;letter-spacing:1.190px;">06/08/2025</span>
<span style="top:704px;font-size:19.4px;color:#c8413b;left:709.23px;-webkit-text-stroke:0.5px #c8413b;letter-spacing:0.765px;">fa 43 dies</span>
<span style="top:704px;font-size:19.4px;color:#14181c;left:1175.22px;-webkit-text-stroke:0.15px #14181c;letter-spacing:1.155px;">1.000,00 €</span>
<span style="top:704px;font-size:19.4px;color:#0c0f12;left:1342.12px;-webkit-text-stroke:0.5px #0c0f12;letter-spacing:1.377px;">1.210,00 €</span>
<span style="top:703px;font-size:19.2px;color:#fff;left:1464.33px;-webkit-text-stroke:0.8px #fff;letter-spacing:-0.008px;">No pagat</span>
<span style="top:703px;font-size:19.2px;color:#fff;left:1702.22px;-webkit-text-stroke:0.8px #fff;letter-spacing:0.321px;">Publicat</span>
<span style="top:705px;font-size:19.4px;color:#414851;left:1822.22px;letter-spacing:0.310px;">Gris</span>
<span style="top:754px;font-size:19.4px;color:#0c0f12;left:83.72px;-webkit-text-stroke:0.55px #0c0f12;letter-spacing:1.736px;">2025/0011</span>
<span style="top:754px;font-size:19.4px;color:#14181c;left:278.11px;-webkit-text-stroke:0.3px #14181c;letter-spacing:0.440px;">Cliente B</span>
<span style="top:754px;font-size:19.4px;color:#14181c;left:504.82px;-webkit-text-stroke:0.3px #14181c;letter-spacing:1.214px;">28/07/2025</span>
<span style="top:754px;font-size:19.4px;color:#c8413b;left:709.23px;-webkit-text-stroke:0.5px #c8413b;letter-spacing:0.765px;">fa 67 dies</span>
<span style="top:754px;font-size:19.4px;color:#14181c;left:1175.22px;-webkit-text-stroke:0.15px #14181c;letter-spacing:1.155px;">1.000,00 €</span>
<span style="top:754px;font-size:19.4px;color:#0c0f12;left:1342.12px;-webkit-text-stroke:0.5px #0c0f12;letter-spacing:1.377px;">1.210,00 €</span>
<span style="top:754px;font-size:19.2px;color:#fff;left:1464.33px;-webkit-text-stroke:0.8px #fff;letter-spacing:-0.008px;">No pagat</span>
<span style="top:754px;font-size:19.2px;color:#fff;left:1702.22px;-webkit-text-stroke:0.8px #fff;letter-spacing:0.321px;">Publicat</span>
<span style="top:755px;font-size:19.4px;color:#414851;left:1822.22px;letter-spacing:0.310px;">Gris</span>
<span style="top:804px;font-size:19.4px;color:#0c0f12;left:83.72px;-webkit-text-stroke:0.55px #0c0f12;letter-spacing:1.533px;">2025/0010</span>
<span style="top:804px;font-size:19.4px;color:#14181c;left:278.22px;-webkit-text-stroke:0.3px #14181c;letter-spacing:0.178px;">Samantha Perez</span>
<span style="top:804px;font-size:19.4px;color:#14181c;left:505.04px;-webkit-text-stroke:0.3px #14181c;letter-spacing:1.190px;">03/07/2025</span>
<span style="top:804px;font-size:19.4px;color:#c8413b;left:708.02px;-webkit-text-stroke:0.5px #c8413b;letter-spacing:1.637px;">16/05/2025</span>
<span style="top:804px;font-size:19.4px;color:#14181c;left:1205.52px;-webkit-text-stroke:0.15px #14181c;letter-spacing:1.175px;">12,00 €</span>
<span style="top:804px;font-size:19.4px;color:#0c0f12;left:1373.42px;-webkit-text-stroke:0.5px #0c0f12;letter-spacing:1.342px;">14,52 €</span>
<span style="top:804px;font-size:19.2px;color:#fff;left:1464.33px;-webkit-text-stroke:0.8px #fff;letter-spacing:-0.008px;">No pagat</span>
<span style="top:804px;font-size:19.2px;color:#fff;left:1702.22px;-webkit-text-stroke:0.8px #fff;letter-spacing:0.321px;">Publicat</span>
<span style="top:855px;font-size:19.4px;color:#0c0f12;left:83.11px;-webkit-text-stroke:0.55px #0c0f12;letter-spacing:0.840px;">RINV/2025/00001</span>
<span style="top:855px;font-size:19.4px;color:#14181c;left:278.22px;-webkit-text-stroke:0.3px #14181c;letter-spacing:0.178px;">Samantha Perez</span>
<span style="top:855px;font-size:19.4px;color:#14181c;left:505.04px;-webkit-text-stroke:0.3px #14181c;letter-spacing:1.190px;">08/05/2025</span>
<span style="top:855px;font-size:19.4px;color:#c8413b;left:708.74px;-webkit-text-stroke:0.5px #c8413b;letter-spacing:1.557px;">08/05/2025</span>
<span style="top:855px;font-size:19.4px;color:#14181c;left:1196.14px;-webkit-text-stroke:0.15px #14181c;letter-spacing:1.426px;">-27,00 €</span>
<span style="top:855px;font-size:19.4px;color:#0c0f12;left:1363.54px;-webkit-text-stroke:0.5px #0c0f12;letter-spacing:1.640px;">-32,67 €</span>
<span style="top:855px;font-size:19.2px;color:#fff;left:1464.33px;-webkit-text-stroke:0.8px #fff;letter-spacing:-0.008px;">No pagat</span>
<span style="top:855px;font-size:19.2px;color:#fff;left:1702.22px;-webkit-text-stroke:0.8px #fff;letter-spacing:0.321px;">Publicat</span>
<span style="top:856px;font-size:19.4px;color:#414851;left:1822.22px;letter-spacing:0.310px;">Gris</span>
<span style="top:905px;font-size:19.4px;color:#0c0f12;left:83.72px;-webkit-text-stroke:0.55px #0c0f12;letter-spacing:1.509px;">2025/0004</span>
<span style="top:905px;font-size:19.4px;color:#14181c;left:278.11px;-webkit-text-stroke:0.3px #14181c;letter-spacing:0.450px;">Cliente A</span>
<span style="top:905px;font-size:19.4px;color:#14181c;left:505.04px;-webkit-text-stroke:0.3px #14181c;letter-spacing:1.190px;">01/04/2025</span>
<span style="top:905px;font-size:19.4px;color:#c8413b;left:708.74px;-webkit-text-stroke:0.5px #c8413b;letter-spacing:1.557px;">01/04/2025</span>
<span style="top:905px;font-size:19.4px;color:#14181c;left:1175.32px;-webkit-text-stroke:0.15px #14181c;letter-spacing:1.144px;">2.000,00 €</span>
<span style="top:905px;font-size:19.4px;color:#0c0f12;left:1342.32px;-webkit-text-stroke:0.5px #0c0f12;letter-spacing:1.355px;">2.420,00 €</span>
<span style="top:905px;font-size:19.2px;color:#111;left:1464.02px;-webkit-text-stroke:0.5px #111;letter-spacing:0.104px;">Parcialment pagat</span>
<span style="top:905px;font-size:19.2px;color:#fff;left:1702.22px;-webkit-text-stroke:0.8px #fff;letter-spacing:0.321px;">Publicat</span>
<span style="top:906px;font-size:19.4px;color:#414851;left:1822.22px;letter-spacing:0.310px;">Gris</span>
<span style="top:956px;font-size:19.4px;color:#0c0f12;left:83.72px;-webkit-text-stroke:0.55px #0c0f12;letter-spacing:1.545px;">2025/0003</span>
<span style="top:956px;font-size:19.4px;color:#14181c;left:278.11px;-webkit-text-stroke:0.3px #14181c;letter-spacing:0.359px;">Cliente C</span>
<span style="top:956px;font-size:19.4px;color:#14181c;left:505.04px;-webkit-text-stroke:0.3px #14181c;letter-spacing:1.190px;">01/04/2025</span>
<span style="top:956px;font-size:19.4px;color:#c8413b;left:709.23px;-webkit-text-stroke:0.5px #c8413b;letter-spacing:0.765px;">fa 34 dies</span>
<span style="top:956px;font-size:19.4px;color:#14181c;left:1194.46px;-webkit-text-stroke:0.15px #14181c;letter-spacing:1.047px;">300,10 €</span>
<span style="top:956px;font-size:19.4px;color:#0c0f12;left:1361.86px;-webkit-text-stroke:0.5px #0c0f12;letter-spacing:1.261px;">363,12 €</span>
<span style="top:955px;font-size:19.2px;color:#fff;left:1464.33px;-webkit-text-stroke:0.8px #fff;letter-spacing:-0.008px;">No pagat</span>
<span style="top:955px;font-size:19.2px;color:#fff;left:1702.22px;-webkit-text-stroke:0.8px #fff;letter-spacing:0.321px;">Publicat</span>
<span style="top:956px;font-size:19.4px;color:#414851;left:1822.22px;letter-spacing:0.310px;">Gris</span>
<span style="top:1014px;font-size:19.4px;color:#40464f;left:1155.73px;font-weight:700;letter-spacing:1.838px;">22.138,72 €</span>
<span style="top:1014px;font-size:19.4px;color:#40464f;left:1325.13px;font-weight:700;letter-spacing:1.858px;">26.095,29 €</span></div>
<div id="L1"><div style="left:1122.3px;top:220px;width:415px;height:513.6px;background:#fff;border-radius:5px;border:1px solid #dfe2e5;box-sizing:border-box;box-shadow:0 8px 16px rgba(0,0,0,.17);"></div>
<div style="left:1123.3px;top:495.8px;width:413px;height:37.6px;background:#ebebeb;"></div>
<div style="left:1221.00px;top:58.10px;width:60.4px;height:60.4px;border-radius:50%;background:#fff;border:2.1px solid #0b0b0b;box-sizing:border-box;box-shadow:0 1px 0 0.2px #0b0b0b;"></div>
<div style="left:1224.30px;top:61.40px;width:53.8px;height:53.8px;border-radius:50%;background:#f28d1b;border:1.2px solid #0b0b0b;box-sizing:border-box;"></div>
<div style="left:1083.00px;top:484.80px;width:60.4px;height:60.4px;border-radius:50%;background:#fff;border:2.1px solid #0b0b0b;box-sizing:border-box;box-shadow:0 1px 0 0.2px #0b0b0b;"></div>
<div style="left:1086.30px;top:488.10px;width:53.8px;height:53.8px;border-radius:50%;background:#f28d1b;border:1.2px solid #0b0b0b;box-sizing:border-box;"></div>
<span style="top:229px;font-size:19.4px;color:#434a54;left:1151.41px;letter-spacing:0.660px;">Exportar</span>
<span style="top:267px;font-size:19.4px;color:#434a54;left:1151.41px;letter-spacing:0.267px;">Eliminar</span>
<span style="top:305px;font-size:19.4px;color:#434a54;left:1151.41px;letter-spacing:0.432px;">Revertir</span>
<span style="top:343px;font-size:19.4px;color:#434a54;left:1152.01px;letter-spacing:0.525px;">Comptabilitzar assentaments</span>
<span style="top:381px;font-size:19.4px;color:#434a54;left:1152.01px;letter-spacing:0.395px;">Crear fitxer de Facturae</span>
<span style="top:419px;font-size:19.4px;color:#434a54;left:1152.96px;letter-spacing:0.445px;">Afegiu a ordre de pagament/cobrament</span>
<span style="top:457px;font-size:19.4px;color:#434a54;left:1151.41px;letter-spacing:0.426px;">Registrar pagament</span>
<span style="top:495px;font-size:19.4px;color:#434a54;left:1151.41px;letter-spacing:0.358px;">Enviar i imprimir</span>
<span style="top:533px;font-size:19.4px;color:#434a54;left:1151.41px;letter-spacing:0.289px;">Enviar factures a SII</span>
<span style="top:571px;font-size:19.4px;color:#434a54;left:1152.08px;letter-spacing:0.485px;">Obtenir Facturae</span>
<span style="top:609px;font-size:19.4px;color:#434a54;left:1152.01px;letter-spacing:0.318px;">Crear arxiu Facturae</span>
<span style="top:647px;font-size:19.4px;color:#434a54;left:1151.41px;letter-spacing:0.270px;">Enviar arxiu de Facturae</span>
<span style="top:685px;font-size:19.4px;color:#434a54;left:1151.41px;letter-spacing:0.474px;">Devolver a borrador</span>
<span style="top:68px;font-size:28.5px;color:#0b0b0b;left:1243.45px;font-weight:700;">2</span>
<span style="top:495px;font-size:28.5px;color:#0b0b0b;left:1105.56px;font-weight:700;">3</span></div>
</body></html>
